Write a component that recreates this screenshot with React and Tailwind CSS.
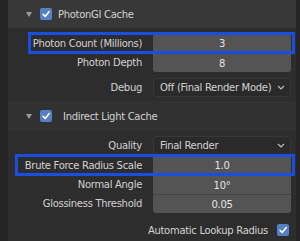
import React from "react";

const Check = () => (
  <span className="flex h-[12px] w-[12px] shrink-0 items-center justify-center rounded-[2px] bg-[#5680c2]">
    <svg width="10" height="10" viewBox="0 0 10 10">
      <path d="M2 5.2 L4.2 7.4 L8.2 2.6" fill="none" stroke="#fff" strokeWidth="1.5" strokeLinecap="round" strokeLinejoin="round" />
    </svg>
  </span>
);

const Tri = () => (
  <svg width="6" height="5" viewBox="0 0 6 5" className="shrink-0">
    <path d="M0 0 L6 0 L3 5 Z" fill="#9a9a9a" />
  </svg>
);

const Chevron = () => (
  <svg width="8" height="5" viewBox="0 0 8 5">
    <path d="M1 1 L4 4 L7 1" fill="none" stroke="#bdbdbd" strokeWidth="1.2" />
  </svg>
);

// one property row: right-aligned label, then the field
const Row = ({ label, h = "h-[19px]", children }) => (
  <div className={`flex ${h} items-center`}>
    <div className="w-[135px] shrink-0 pr-[1px] text-right">{label}</div>
    <div className="ml-[10px] mr-[5px] flex h-full flex-1">{children}</div>
  </div>
);

const Num = ({ children, className = "" }) => (
  <div className={`flex h-full w-full items-center justify-center bg-[#545454] text-[#e4e4e4] ${className}`}>{children}</div>
);

const Drop = ({ children, className = "" }) => (
  <div className={`flex h-full w-full items-center justify-between border border-[#383838] bg-[#2a2a2a] pl-[6px] pr-[5px] ${className}`}>
    <span>{children}</span>
    <Chevron />
  </div>
);

const App = () => {
  return (
    <div
      className="relative h-[241px] w-[300px] overflow-hidden whitespace-nowrap bg-[#252525] text-[10px] tracking-[-0.3px] text-[#d2d2d2]"
      style={{ fontFamily: '"DejaVu Sans", sans-serif' }}
    >
      <div className="ml-[8px] mr-[4px] h-full bg-[#2d2d2d]">
        {/* PhotonGI Cache */}
        <div className="flex h-[28px] items-center bg-[#383838] pl-[18px]">
          <Tri />
          <span className="ml-[8px]"><Check /></span>
          <span className="ml-[6px]">PhotonGI Cache</span>
        </div>

        <div className="h-[6px]" />
        <Row label="Photon Count (Millions)">
          <Num className="rounded-t-[3px]">3</Num>
        </Row>
        <Row label="Photon Depth">
          <Num className="rounded-b-[3px] border-t border-[#4a4a4a]">8</Num>
        </Row>

        <div className="h-[6px]" />
        <Row label="Debug">
          <Drop className="rounded-[3px]">Off (Final Render Mode)</Drop>
        </Row>

        {/* Indirect Light Cache */}
        <div className="mt-[4px] flex h-[30px] items-center bg-[#313131] pl-[18px]">
          <Tri />
          <span className="ml-[8px]"><Check /></span>
          <span className="ml-[11px]">Indirect Light Cache</span>
        </div>

        <div className="h-[5px]" />
        <Row label="Quality">
          <Drop className="rounded-[3px]">Final Render</Drop>
        </Row>
        <Row label="Brute Force Radius Scale" h="h-[20px]">
          <Num className="rounded-t-[3px]">1.0</Num>
        </Row>
        <Row label="Normal Angle">
          <Num className="border-t border-[#444]">10°</Num>
        </Row>
        <Row label="Glossiness Threshold">
          <Num className="rounded-b-[3px] border-t border-[#444]">0.05</Num>
        </Row>

        <div className="mt-[7px] flex h-[20px] items-center justify-end pr-[7px]">
          <span className="mr-[9px]">Automatic Lookup Radius</span>
          <Check />
        </div>
      </div>

      {/* blue highlight frames drawn over the rows */}
      <div className="absolute left-[28px] top-[32px] h-[22px] w-[267px] border-[3px] border-[#1a4de2]" />
      <div className="absolute left-[15px] top-[154px] h-[22px] w-[280px] border-[3px] border-[#1a4de2]" />
    </div>
  );
};

export default App;
